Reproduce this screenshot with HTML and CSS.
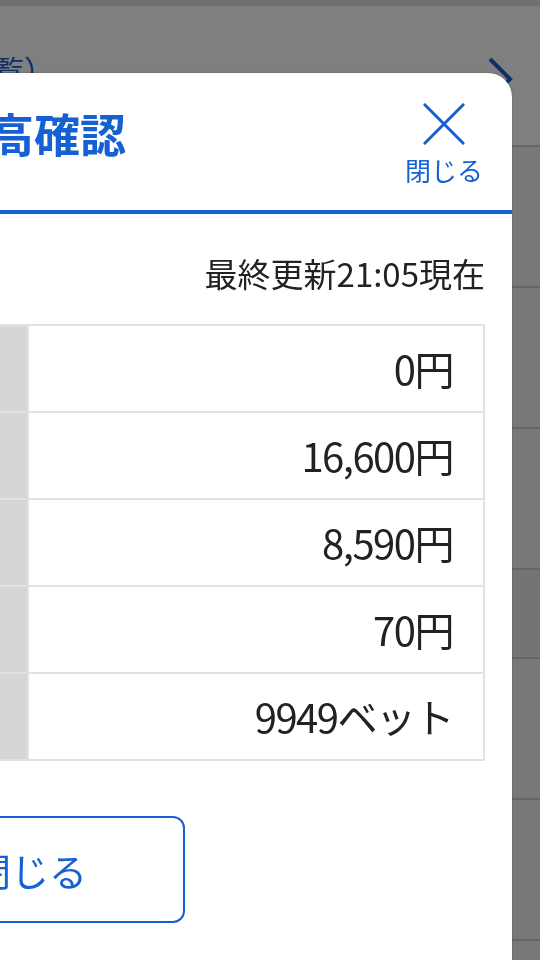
FILE: index.html
```html
<!DOCTYPE html>
<html lang="ja">
<head>
    <meta charset="UTF-8">
    <meta name="viewport" content="width=device-width, initial-scale=1.0">
    <title>残高確認</title>
    <link rel="stylesheet" href="styles.css">
</head>
<body>

    <div class="page">
        <div class="topbar"></div>
        <ul class="menu">
            <li class="menu-item">
                <span class="menu-text">入出金明細一覧）</span>
                <svg class="chevron" width="26" height="46" viewBox="0 0 26 46">
                    <polyline points="3,3 23,23 3,43" fill="none" stroke="#1a5ccc" stroke-width="4"/>
                </svg>
            </li>
            <li class="menu-item alt"></li>
            <li class="menu-item alt"></li>
            <li class="menu-item alt"></li>
            <li class="menu-item short"></li>
            <li class="menu-item alt"></li>
            <li class="menu-item alt"></li>
            <li class="menu-item alt"></li>
        </ul>
    </div>

    <div class="overlay"></div>

    <div class="modal">
        <div class="modal-head">
            <h2 class="modal-title">残高確認</h2>
            <button class="close-x">
                <svg width="42" height="42" viewBox="0 0 42 42">
                    <path d="M1 1 L41 41 M41 1 L1 41" stroke="#1560d2" stroke-width="3"/>
                </svg>
                <span>閉じる</span>
            </button>
        </div>

        <div class="modal-body">
            <p class="updated">最終更新21:05現在</p>
            <table class="balance">
                <tr><th>ウォレット残高</th><td>0円</td></tr>
                <tr><th>購入限度額</th><td>16,600円</td></tr>
                <tr><th>払戻金</th><td>8,590円</td></tr>
                <tr><th>ボーナス</th><td>70円</td></tr>
                <tr><th>ベット数</th><td>9949ベット</td></tr>
            </table>
            <div class="modal-foot">
                <button class="close-btn">閉じる</button>
            </div>
        </div>
    </div>

</body>
</html>
```

FILE: styles.css
```css
body {
    font-family: "Noto Sans CJK JP", sans-serif;
    background-color: #ffffff;
    color: #222222;
    margin: 0;
    padding: 0;
    overflow: hidden;
}

.topbar {
    height: 6px;
    background-color: #dce1e8;
}

.menu {
    list-style: none;
    margin: 0;
    padding: 0;
}

.menu-item {
    height: 141px;
    border-bottom: 2px solid #cccccc;
    display: flex;
    justify-content: space-between;
    align-items: flex-start;
    padding: 48px 27px 0 0;
    box-sizing: border-box;
}

.menu-item.alt {
    background-color: #f0f0f0;
}

.menu-item.short {
    height: 89px;
    background-color: #e8e8e8;
}

.menu-text {
    margin-left: -186px;
    font-size: 30px;
    line-height: 1;
    color: #1a5ccc;
    white-space: nowrap;
}

.chevron {
    margin-top: 2px;
}

.overlay {
    position: fixed;
    top: 0;
    left: 0;
    right: 0;
    bottom: 0;
    background-color: rgba(0, 0, 0, 0.5);
}

.modal {
    position: fixed;
    top: 73px;
    left: -452px;
    width: 964px;
    bottom: 0;
    background-color: #ffffff;
    border-top-right-radius: 24px;
    box-shadow: 0 0 2px rgba(0, 0, 0, 0.3);
}

.modal-head {
    height: 141px;
    box-sizing: border-box;
    padding: 30px 29px 0 27px;
    border-bottom: 4px solid #1560d2;
    display: grid;
    grid-template-columns: 1fr auto 1fr;
    align-items: start;
}

.modal-title {
    grid-column: 2;
    margin: 6px 0 0;
    padding-left: 10px;
    font-size: 46px;
    line-height: 1;
    font-weight: 700;
    color: #1560d2;
}

.close-x {
    grid-column: 3;
    justify-self: end;
    display: flex;
    flex-direction: column;
    align-items: center;
    gap: 10px;
    padding: 0;
    border: none;
    background: transparent;
    font-family: inherit;
    font-size: 26px;
    line-height: 30px;
    color: #1560d2;
}

.modal-body {
    padding: 0 27px;
}

.updated {
    margin: 40px 0 30px;
    text-align: right;
    font-size: 33px;
    line-height: 1.2;
}

.balance {
    width: 100%;
    border-collapse: collapse;
    border: 2px solid #e2e2e2;
}

.balance th,
.balance td {
    border: 2px solid #e2e2e2;
    height: 85px;
    padding: 0;
}

.balance th {
    width: 452px;
    background-color: #d6d6d6;
    text-align: left;
    font-weight: normal;
    font-size: 30px;
    padding-left: 24px;
    box-sizing: border-box;
}

.balance td {
    text-align: right;
    padding-right: 30px;
    font-size: 40px;
    letter-spacing: -1.5px;
    color: #222222;
}

.modal-foot {
    display: flex;
    justify-content: center;
    margin-top: 55px;
}

.close-btn {
    width: 310px;
    height: 107px;
    border: 2px solid #1560d2;
    border-radius: 12px;
    background-color: #ffffff;
    color: #1560d2;
    font-family: inherit;
    font-size: 38px;
}
```
